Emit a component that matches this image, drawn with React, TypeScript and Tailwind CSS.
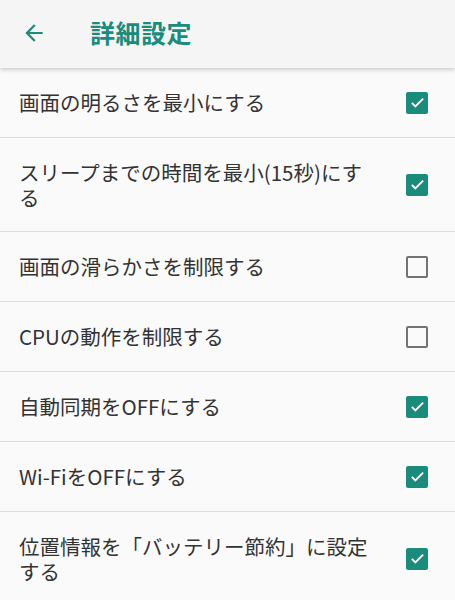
const items = [
	{ label: "画面の明るさを最小にする", checked: true },
	{ label: "スリープまでの時間を最小(15秒)にする", checked: true },
	{ label: "画面の滑らかさを制限する", checked: false },
	{ label: "CPUの動作を制限する", checked: false },
	{ label: "自動同期をOFFにする", checked: true },
	{ label: "Wi-FiをOFFにする", checked: true },
	{ label: "位置情報を「バッテリー節約」に設定する", checked: true },
];

function Checkbox({ checked }: { checked: boolean }) {
	if (!checked) {
		return <div className="w-[22px] h-[22px] rounded-[2px] border-[2.5px] border-[#737373]" />;
	}
	return (
		<div className="w-[22px] h-[22px] rounded-[2px] bg-[#1a8c7c] flex items-center justify-center">
			<svg width="17" height="17" viewBox="0 0 24 24" fill="none" stroke="white" strokeWidth="2.6">
				<path d="M4 12.5l5 5L20 6.5" />
			</svg>
		</div>
	);
}

export default function App() {
	return (
		<div
			className="w-[455px] h-[600px] overflow-hidden bg-[#fafafa]"
			style={{ fontFamily: '"Noto Sans CJK JP", Roboto, sans-serif' }}
		>
			<div className="h-[68px] bg-[#f5f5f5] flex items-center shadow-[0_2px_4px_rgba(0,0,0,0.18)] relative z-10">
				<svg className="ml-[21px] -mt-[2px]" width="26" height="26" viewBox="0 0 24 24" fill="#1a8c7c">
					<path d="M20 11H7.83l5.59-5.59L12 4l-8 8 8 8 1.41-1.41L7.83 13H20v-2z" />
				</svg>
				<h1 className="ml-[43px] -mt-[3px] text-[25px] font-bold text-[#1a8c7c] tracking-[0.5px]">詳細設定</h1>
			</div>
			<div className="flex flex-col">
				{items.map((item, i) => (
					<div
						key={i}
						className={`flex items-center justify-between pl-[19px] pr-[27px] border-b border-[#dedede] ${
							item.label.length > 14 ? "h-[94px]" : "h-[70px]"
						}`}
					>
						<div className="w-[352px] text-[20.5px] leading-[25px] text-[#333333]">{item.label}</div>
						<Checkbox checked={item.checked} />
					</div>
				))}
			</div>
		</div>
	);
}
